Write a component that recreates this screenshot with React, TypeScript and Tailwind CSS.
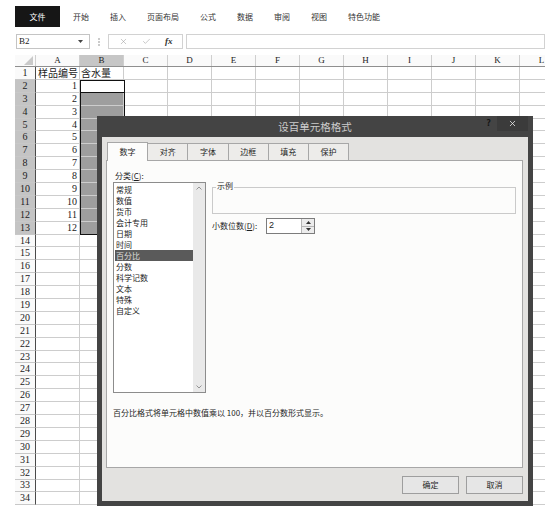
import React from "react";
import { X, Check } from "lucide-react";

const COLS = ["A", "B", "C", "D", "E", "F", "G", "H", "I", "J", "K", "L"];
const ROWS = Array.from({ length: 34 }, (_, i) => i + 1);
const TABS = ["开始", "插入", "页面布局", "公式", "数据", "审阅", "视图", "特色功能"];
const DIALOG_TABS = ["数字", "对齐", "字体", "边框", "填充", "保护"];
const CATS = ["常规", "数值", "货币", "会计专用", "日期", "时间", "百分比", "分数", "科学记数", "文本", "特殊", "自定义"];

function Sheet() {
  return (
    <div className="relative ml-[15px] mt-[5px] w-[530px] overflow-hidden font-['Liberation_Serif','Noto_Sans_CJK_SC',serif] text-[#222]">
      {/* column headers */}
      <div className="flex h-[12px] border-b border-[#8f8f8f] bg-[#fafafa]">
        <div className="relative w-[21px] shrink-0 border-r border-[#cfcfcf]">
          <svg className="absolute right-[2px] bottom-[1px]" width="9" height="9" viewBox="0 0 9 9">
            <polygon points="9,0 9,9 0,9" fill="#c9c9c9" />
          </svg>
        </div>
        {COLS.map((c) => (
          <div
            key={c}
            className={`w-[44px] shrink-0 border-r border-[#cfcfcf] flex items-center justify-center text-[9px] leading-none ${c === "B" ? "bg-[#c6c6c6]" : ""}`}
          >
            {c}
          </div>
        ))}
      </div>

      {/* rows */}
      {ROWS.map((r) => {
        const sel = r >= 2 && r <= 13;
        return (
          <div key={r} className="flex h-[12.9px]">
            <div
              className={`w-[21px] shrink-0 border-r border-r-[#4a4a4a] border-b border-b-[#c8c8c8] flex items-center justify-center text-[10px] leading-none ${sel ? "bg-[#c4c4c4]" : "bg-[#fafafa]"}`}
            >
              {r}
            </div>
            {COLS.map((c) => {
              let content: React.ReactNode = null;
              let cls = "";
              if (c === "A" && r === 1) content = <span className="pl-[2px] font-['Noto_Sans_CJK_SC',sans-serif] text-[10px] whitespace-nowrap">样品编号</span>;
              if (c === "B" && r === 1) content = <span className="pl-[1px] font-['Noto_Sans_CJK_SC',sans-serif] text-[10px] whitespace-nowrap">含水量</span>;
              if (c === "A" && sel) {
                content = <span className="ml-auto pr-[2px] text-[10px]">{r - 1}</span>;
              }
              if (c === "B" && r >= 3 && r <= 13) cls = "bg-[#9e9e9e]";
              return (
                <div
                  key={c}
                  className={`w-[44px] shrink-0 border-r border-b border-[#cdcdcd] flex items-center leading-none ${cls}`}
                >
                  {content}
                </div>
              );
            })}
          </div>
        );
      })}

      {/* selection outline B2:B13 */}
      <div className="absolute left-[64.5px] top-[24.5px] w-[45px] h-[155.5px] border-[1.5px] border-[#111]" />
      <div className="absolute left-[64.5px] top-[24.5px] w-[45px] h-[13.5px] border-[1.5px] border-[#111] bg-white" />
    </div>
  );
}

function Dialog() {
  return (
    <div className="absolute left-[97px] top-[116px] w-[436px] h-[390px] bg-[#444444] flex flex-col font-['Noto_Sans_CJK_SC','Noto_Sans',sans-serif]">
      {/* title bar */}
      <div className="relative h-[21px] shrink-0 flex items-center justify-center text-[10.5px] text-[#cccccc]">
        设百单元格格式
        <span className="absolute right-[42px] top-[2px] text-[9px] font-bold text-[#151515] leading-none">?</span>
        <div className="absolute right-[5px] top-0 w-[31px] h-[15px] bg-[#3b3b3b] flex items-center justify-center">
          <X size={9} strokeWidth={2} color="#f0f0f0" />
        </div>
      </div>

      {/* body */}
      <div className="flex-1 mx-[5px] mb-[5px] bg-[#e3e2e0] flex flex-col pl-[4px] pr-[5px] pt-[5px] text-[8px] text-[#1e1e1e]">
        {/* tabs */}
        <div className="flex h-[18px] ml-[1px] items-end relative z-10">
          {DIALOG_TABS.map((t, i) => (
            <div
              key={t}
              className={`w-[41.2px] flex items-center justify-center border-t border-l border-r border-[#a7a7a7] ${i > 0 ? "-ml-px" : ""} ${i === 0 ? "h-[19px] -mb-px bg-[#fcfcfb] relative z-10" : "h-[17px] bg-[#edecea]"}`}
            >
              {t}
            </div>
          ))}
        </div>

        {/* panel */}
        <div className="h-[308px] border border-[#a7a7a7] bg-[#fcfcfb] pl-[6px] pt-[8px]">
          <div className="flex gap-[6px]">
            <div className="w-[93px] shrink-0">
              <div className="h-[13px] pl-[2px] leading-[13px]">
                分类(<u>C</u>):
              </div>
              <div className="h-[211px] border border-[#8c8c8c] bg-white flex">
                <div className="flex-1 pt-[1px] pl-[1px]">
                  {CATS.map((c) => (
                    <div
                      key={c}
                      className={`h-[11px] leading-[11px] pl-[1px] ${c === "百分比" ? "bg-[#5a5a5a] text-[#dedede]" : ""}`}
                    >
                      {c}
                    </div>
                  ))}
                </div>
                <div className="w-[12px] bg-[#e9e9e9] flex flex-col items-center justify-between py-[3px] text-[#8a8a8a]">
                  <svg width="6" height="4" viewBox="0 0 6 4"><polyline points="0.5,3.5 3,1 5.5,3.5" fill="none" stroke="#8a8a8a" strokeWidth="0.9" /></svg>
                  <svg width="6" height="4" viewBox="0 0 6 4"><polyline points="0.5,0.5 3,3 5.5,0.5" fill="none" stroke="#8a8a8a" strokeWidth="0.9" /></svg>
                </div>
              </div>
            </div>

            <div className="flex-1 pr-[6px]">
              <div className="relative mt-[18px] h-[27px] border border-[#cacaca]">
                <span className="absolute -top-[6px] left-[3px] bg-[#fcfcfb] px-[1px] leading-none">示例</span>
              </div>
              <div className="mt-[4px] flex items-center h-[16px]">
                <span className="w-[54px] shrink-0">
                  小数位数(<u>D</u>):
                </span>
                <div className="w-[49px] h-[16px] border border-[#7c7c7c] bg-white flex">
                  <span className="flex-1 pl-[2px] text-[9px] leading-[13px] font-['Liberation_Sans',sans-serif]">2</span>
                  <div className="w-[13px] border-l border-[#b5b5b5] bg-[#ececec] flex flex-col">
                    <div className="flex-1 flex items-center justify-center border-b border-[#b5b5b5]">
                      <svg width="5" height="3" viewBox="0 0 5 3"><polygon points="0,3 2.5,0 5,3" fill="#333" /></svg>
                    </div>
                    <div className="flex-1 flex items-center justify-center">
                      <svg width="5" height="3" viewBox="0 0 5 3"><polygon points="0,0 2.5,3 5,0" fill="#333" /></svg>
                    </div>
                  </div>
                </div>
              </div>
            </div>
          </div>

          <div className="mt-[15px] leading-[10px]">百分比格式将单元格中数值乘以 100，并以百分数形式显示。</div>
        </div>

        {/* buttons */}
        <div className="mt-[8px] flex justify-end gap-[7px]">
          <div className="w-[57px] h-[18px] border border-[#9e9e9e] bg-[#e6e6e6] flex items-center justify-center">确定</div>
          <div className="w-[57px] h-[18px] border border-[#9e9e9e] bg-[#e6e6e6] flex items-center justify-center">取消</div>
        </div>
      </div>
    </div>
  );
}

export default function App() {
  return (
    <div className="relative w-[558px] h-[515px] overflow-hidden bg-white text-[#222] font-['Noto_Sans_CJK_SC','Noto_Sans',sans-serif]">
      {/* ribbon tabs */}
      <div className="flex items-start h-[33px] pl-[15px] pt-[6px] text-[8px]">
        <div className="w-[45px] h-[21px] bg-[#161616] text-white flex items-center justify-center">文件</div>
        <div className="flex items-center h-[21px] ml-[13px] gap-[21px] text-[#333]">
          {TABS.map((t) => (
            <span key={t}>{t}</span>
          ))}
        </div>
      </div>

      {/* formula bar */}
      <div className="flex items-center h-[17px] pl-[16px] text-[9px]">
        <div className="w-[74px] h-[15px] border border-[#c4c4c4] flex items-center justify-between pl-[2px] pr-[6px]">
          <span className="font-['Liberation_Serif',serif] leading-none">B2</span>
          <svg width="5" height="3" viewBox="0 0 5 3"><polygon points="0,0 2.5,3 5,0" fill="#444" /></svg>
        </div>
        <div className="w-[18px] flex justify-center">
          <svg width="2" height="8" viewBox="0 0 2 8">
            <circle cx="1" cy="1" r="0.8" fill="#888" />
            <circle cx="1" cy="4" r="0.8" fill="#888" />
            <circle cx="1" cy="7" r="0.8" fill="#888" />
          </svg>
        </div>
        <div className="w-[75px] h-[15px] border border-[#d2d2d2] flex items-center pl-[10px]">
          <X size={9} strokeWidth={1.4} color="#9a9a9a" />
          <Check size={9} strokeWidth={1.4} color="#9a9a9a" className="ml-[14px]" />
          <span className="ml-[14px] italic font-bold font-['Liberation_Serif',serif] text-[9px] text-[#333] leading-none">fx</span>
        </div>
        <div className="ml-[3px] w-[359px] h-[15px] border border-[#d2d2d2]" />
      </div>

      <Sheet />
      <Dialog />
    </div>
  );
}
